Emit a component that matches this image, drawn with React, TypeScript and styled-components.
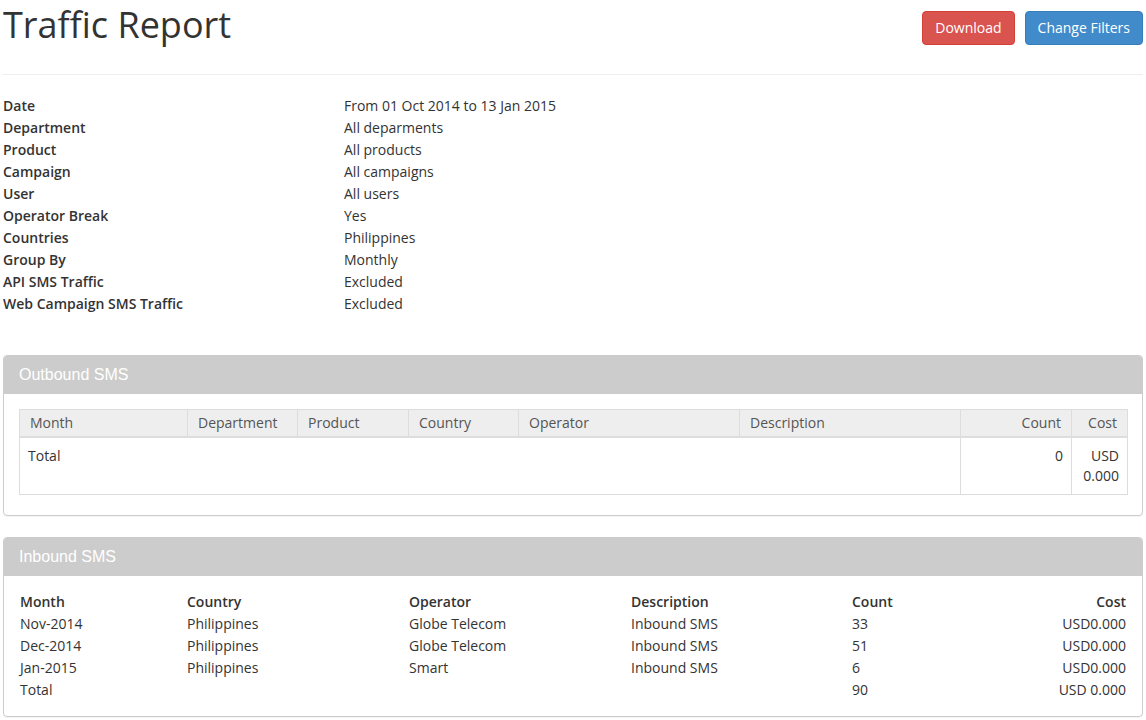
import React from "react";
import styled, { createGlobalStyle } from "styled-components";

const GlobalStyle = createGlobalStyle`
  html, body { margin: 0; padding: 0; background: #fff; }
  body {
    font-family: "Open Sans", "Liberation Sans", Arial, sans-serif;
    font-size: 14px;
    color: #333;
  }
  * { box-sizing: border-box; }
`;

const Page = styled.div`
  padding: 0 3px;
`;

const PageHeader = styled.div`
  display: flex;
  justify-content: space-between;
  align-items: flex-start;
  height: 75px;
  border-bottom: 1px solid #eee;
`;

const Title = styled.h1`
  margin: 0;
  padding-top: 3px;
  font-size: 36px;
  font-weight: 400;
  line-height: 44px;
  color: #333;
`;

const Actions = styled.div`
  display: flex;
  gap: 10px;
  padding-top: 11px;
`;

const Button = styled.button<{ $variant: "danger" | "primary" }>`
  font-family: "Open Sans", "Liberation Sans", Arial, sans-serif;
  font-size: 14px;
  line-height: 20px;
  height: 34px;
  padding: 6px 12px;
  border-radius: 4px;
  color: #fff;
  cursor: pointer;
  background: ${(p) => (p.$variant === "danger" ? "#d9534f" : "#428bca")};
  border: 1px solid ${(p) => (p.$variant === "danger" ? "#d43f3a" : "#357ebd")};
`;

const Summary = styled.dl`
  display: grid;
  grid-template-columns: 341px 1fr;
  margin: 20px 0 40px;
  line-height: 22px;
`;

const Term = styled.dt`
  font-weight: 600;
  margin: 0;
`;

const Def = styled.dd`
  margin: 0;
`;

const Panel = styled.section`
  border: 1px solid #ccc;
  border-radius: 4px;
  margin-bottom: 21px;
  box-shadow: 0 1px 1px rgba(0, 0, 0, 0.05);
  overflow: hidden;
`;

const PanelHeading = styled.div`
  background: #ccc;
  color: #fff;
  font-family: "Liberation Sans", Arial, sans-serif;
  font-size: 16px;
  line-height: 18px;
  padding: 10px 15px;
  border-bottom: 1px solid #ccc;
  height: 38px;
`;

const PanelBody = styled.div<{ $bottom: number; $top: number }>`
  padding: ${(p) => p.$top}px 15px ${(p) => p.$bottom}px;
`;

const BorderedTable = styled.table`
  width: 100%;
  border-collapse: collapse;
  table-layout: fixed;
  border: 1px solid #ddd;
`;

const HeadCell = styled.th<{ $right?: boolean }>`
  background: #eee;
  color: #555;
  font-weight: 400;
  text-align: ${(p) => (p.$right ? "right" : "left")};
  padding: 3px 10px 3px;
  line-height: 20px;
  border: 1px solid #ddd;
  border-bottom: 2px solid #ddd;
`;

const BodyCell = styled.td<{ $right?: boolean }>`
  text-align: ${(p) => (p.$right ? "right" : "left")};
  vertical-align: top;
  padding: 8px;
  line-height: 20px;
  border: 1px solid #ddd;
`;

const PlainGrid = styled.div`
  display: grid;
  grid-template-columns: 167px 222px 222px 221px 1fr 1fr;
  line-height: 22px;
  padding: 0 1px;
`;

const GridHead = styled.div<{ $right?: boolean }>`
  font-weight: 600;
  text-align: ${(p) => (p.$right ? "right" : "left")};
`;

const GridCell = styled.div<{ $right?: boolean }>`
  text-align: ${(p) => (p.$right ? "right" : "left")};
`;

const summary: [string, string][] = [
  ["Date", "From 01 Oct 2014 to 13 Jan 2015"],
  ["Department", "All deparments"],
  ["Product", "All products"],
  ["Campaign", "All campaigns"],
  ["User", "All users"],
  ["Operator Break", "Yes"],
  ["Countries", "Philippines"],
  ["Group By", "Monthly"],
  ["API SMS Traffic", "Excluded"],
  ["Web Campaign SMS Traffic", "Excluded"],
];

const outCols: { label: string; w: number; right?: boolean }[] = [
  { label: "Month", w: 168 },
  { label: "Department", w: 110 },
  { label: "Product", w: 111 },
  { label: "Country", w: 110 },
  { label: "Operator", w: 221 },
  { label: "Description", w: 221 },
  { label: "Count", w: 111, right: true },
  { label: "Cost", w: 56, right: true },
];

const inbound = [
  ["Nov-2014", "Philippines", "Globe Telecom", "Inbound SMS", "33", "USD0.000"],
  ["Dec-2014", "Philippines", "Globe Telecom", "Inbound SMS", "51", "USD0.000"],
  ["Jan-2015", "Philippines", "Smart", "Inbound SMS", "6", "USD0.000"],
  ["Total", "", "", "", "90", "USD 0.000"],
];

const inHead = ["Month", "Country", "Operator", "Description", "Count", "Cost"];

export default function App() {
  return (
    <Page>
      <GlobalStyle />
      <PageHeader>
        <Title>Traffic Report</Title>
        <Actions>
          <Button $variant="danger">Download</Button>
          <Button $variant="primary">Change Filters</Button>
        </Actions>
      </PageHeader>

      <Summary>
        {summary.map(([k, v]) => (
          <React.Fragment key={k}>
            <Term>{k}</Term>
            <Def>{v}</Def>
          </React.Fragment>
        ))}
      </Summary>

      <Panel>
        <PanelHeading>Outbound SMS</PanelHeading>
        <PanelBody $top={15} $bottom={20}>
          <BorderedTable>
            <colgroup>
              {outCols.map((c) => (
                <col key={c.label} style={{ width: c.w }} />
              ))}
            </colgroup>
            <thead>
              <tr>
                {outCols.map((c) => (
                  <HeadCell key={c.label} $right={c.right}>
                    {c.label}
                  </HeadCell>
                ))}
              </tr>
            </thead>
            <tbody>
              <tr>
                <BodyCell colSpan={6}>Total</BodyCell>
                <BodyCell $right>0</BodyCell>
                <BodyCell $right>USD 0.000</BodyCell>
              </tr>
            </tbody>
          </BorderedTable>
        </PanelBody>
      </Panel>

      <Panel>
        <PanelHeading>Inbound SMS</PanelHeading>
        <PanelBody $top={15} $bottom={15}>
          <PlainGrid>
            {inHead.map((h, i) => (
              <GridHead key={h} $right={i === 5}>
                {h}
              </GridHead>
            ))}
            {inbound.map((row, r) =>
              row.map((cell, i) => (
                <GridCell key={`${r}-${i}`} $right={i === 5}>
                  {cell}
                </GridCell>
              ))
            )}
          </PlainGrid>
        </PanelBody>
      </Panel>
    </Page>
  );
}
